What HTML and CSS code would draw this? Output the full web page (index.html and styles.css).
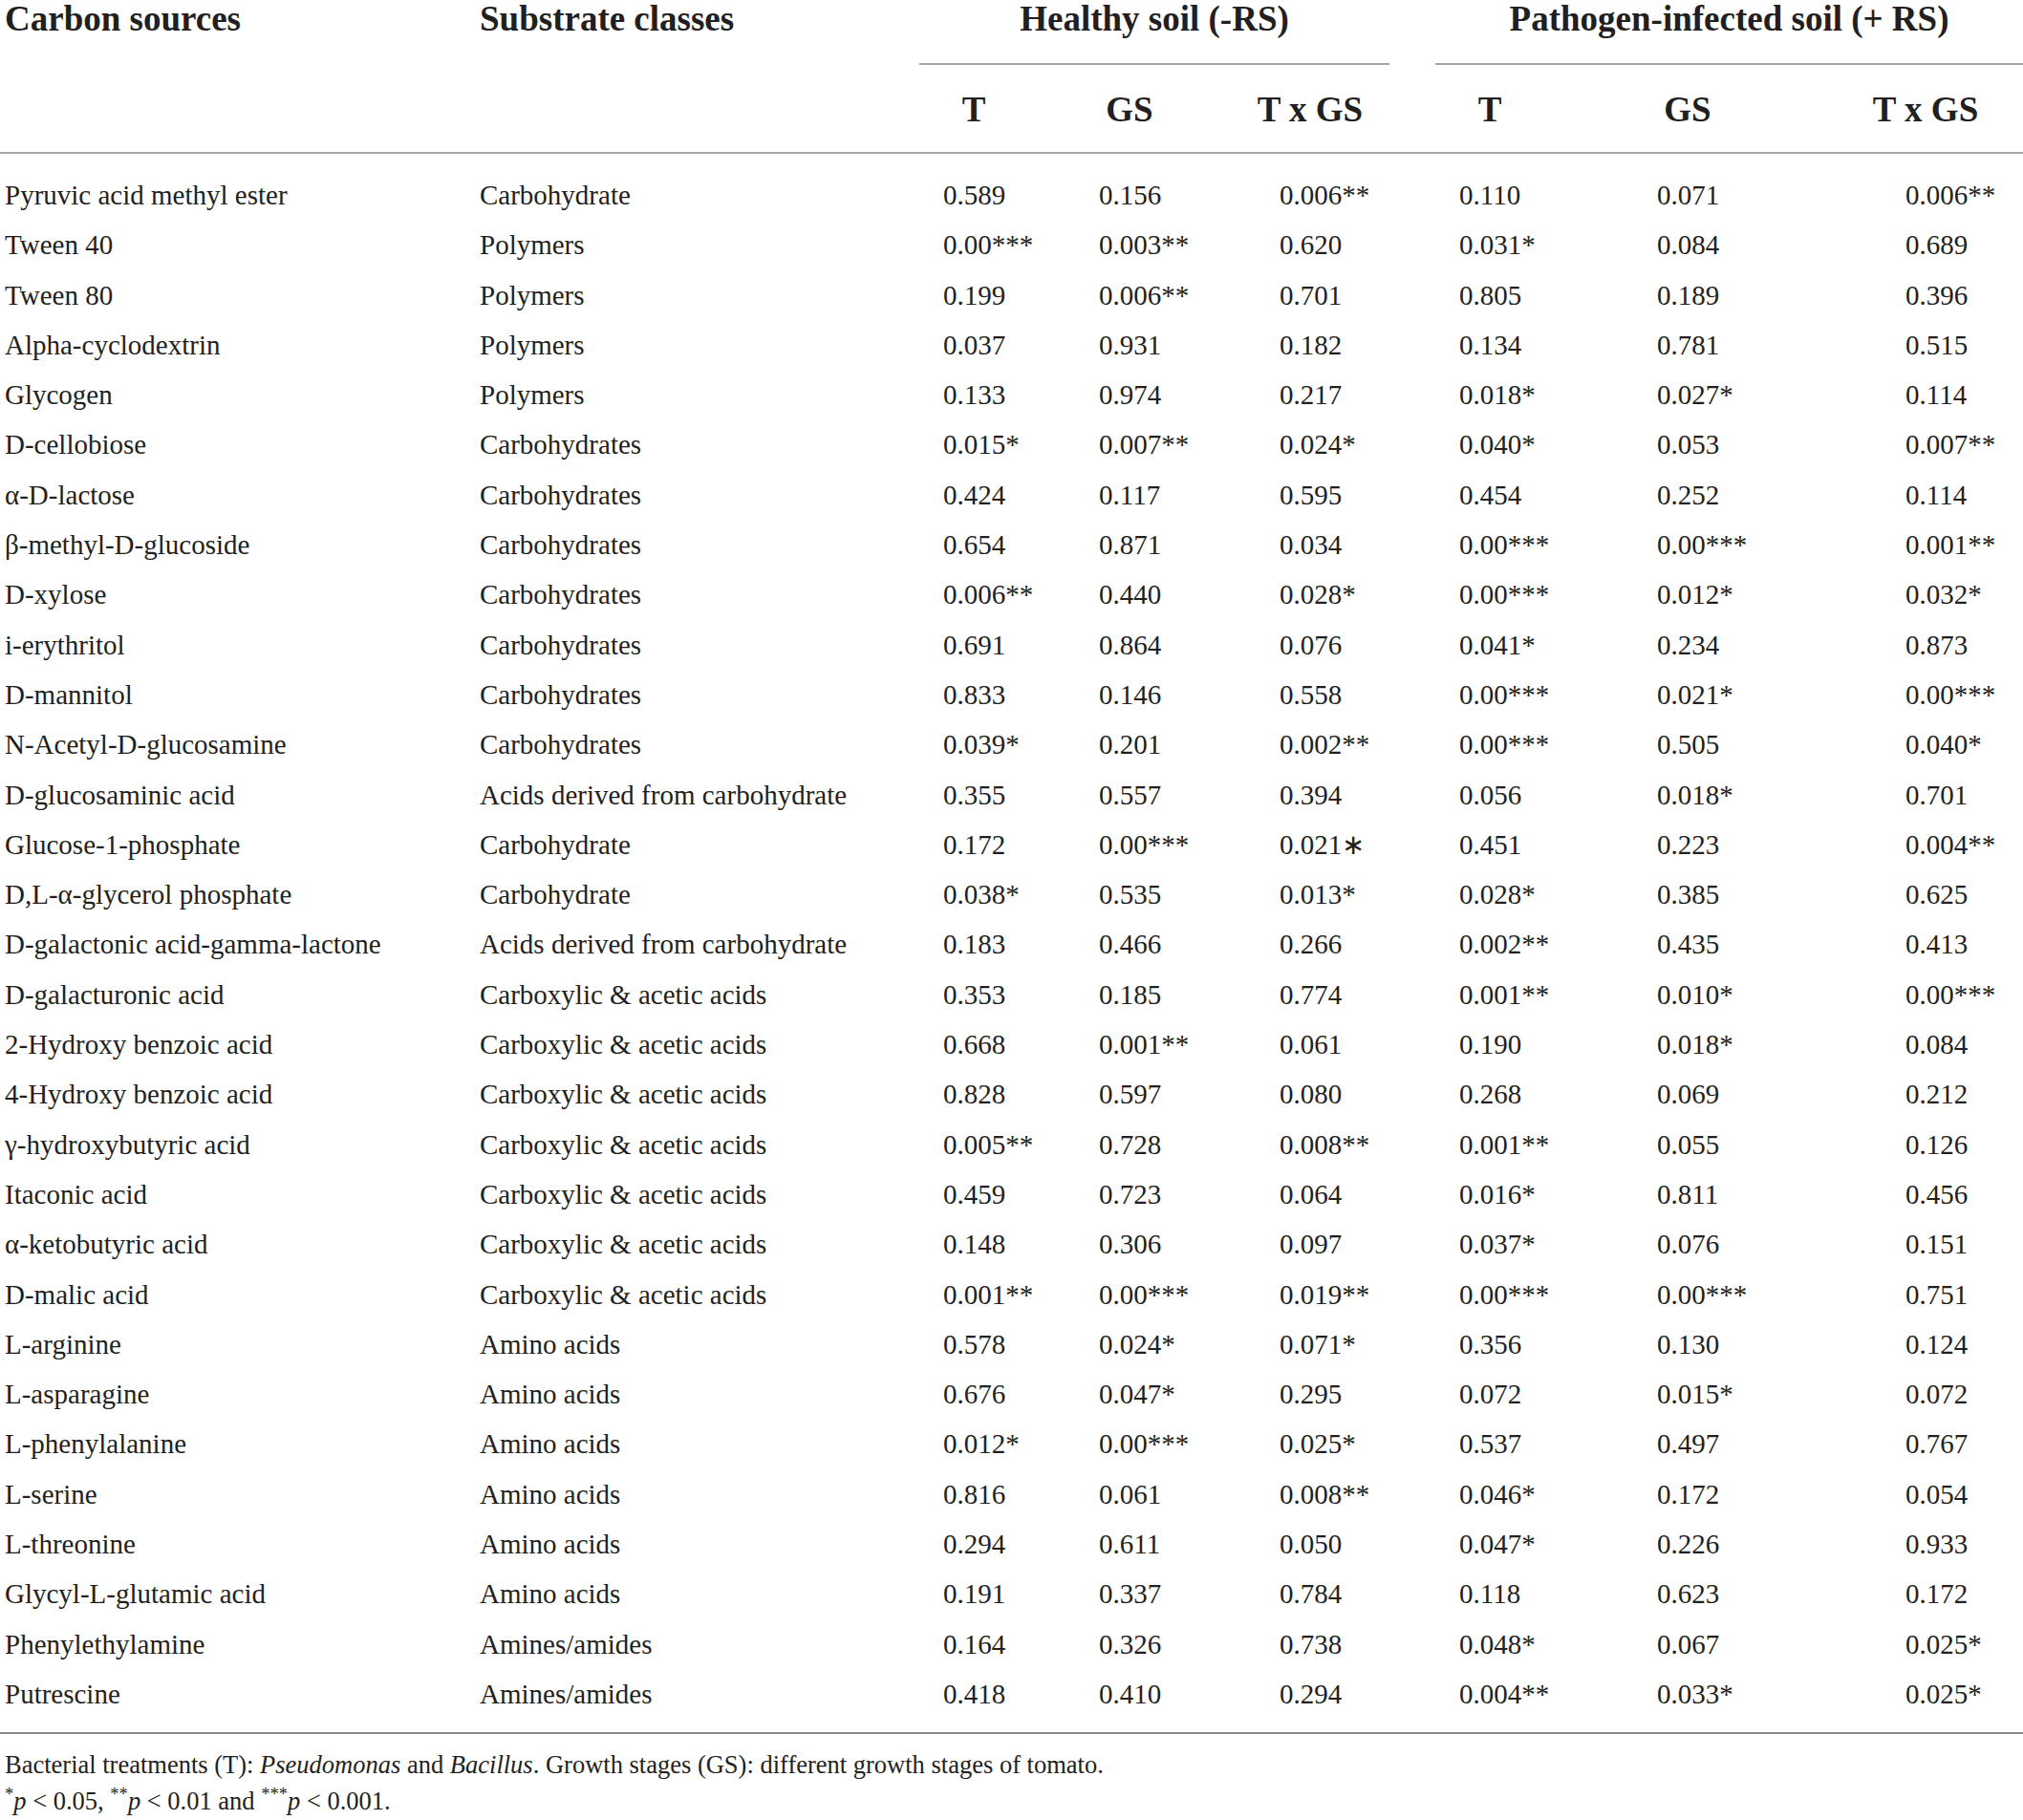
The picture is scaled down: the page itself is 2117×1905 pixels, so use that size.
FILE: index.html
```html
<!DOCTYPE html>
<html lang="en">
<head>
    <meta charset="UTF-8">
    <title>Carbon source utilisation</title>
    <link rel="stylesheet" href="styles.css">
</head>
<body>
    <table class="stats">
        <colgroup>
            <col class="c-name">
            <col class="c-class">
            <col class="c-h1">
            <col class="c-h2">
            <col class="c-h3">
            <col class="c-p1">
            <col class="c-p2">
            <col class="c-p3">
        </colgroup>
        <thead>
            <tr class="group-row">
                <th rowspan="2" class="lead">Carbon sources</th>
                <th rowspan="2" class="lead">Substrate classes</th>
                <th colspan="3" class="group healthy"><div class="group-label">Healthy soil (-RS)</div></th>
                <th colspan="3" class="group infected"><div class="group-label">Pathogen-infected soil (+ RS)</div></th>
            </tr>
            <tr class="sub-row">
                <th class="num"><span class="sub">T</span></th>
                <th class="num"><span class="sub">GS</span></th>
                <th class="num"><span class="sub">T x GS</span></th>
                <th class="num"><span class="sub">T</span></th>
                <th class="num"><span class="sub">GS</span></th>
                <th class="num"><span class="sub narrow">T x GS</span></th>
            </tr>
        </thead>
        <tbody>
            <tr><td>Pyruvic acid methyl ester</td><td>Carbohydrate</td><td>0.589</td><td>0.156</td><td>0.006**</td><td>0.110</td><td>0.071</td><td>0.006**</td></tr>
            <tr><td>Tween 40</td><td>Polymers</td><td>0.00***</td><td>0.003**</td><td>0.620</td><td>0.031*</td><td>0.084</td><td>0.689</td></tr>
            <tr><td>Tween 80</td><td>Polymers</td><td>0.199</td><td>0.006**</td><td>0.701</td><td>0.805</td><td>0.189</td><td>0.396</td></tr>
            <tr><td>Alpha-cyclodextrin</td><td>Polymers</td><td>0.037</td><td>0.931</td><td>0.182</td><td>0.134</td><td>0.781</td><td>0.515</td></tr>
            <tr><td>Glycogen</td><td>Polymers</td><td>0.133</td><td>0.974</td><td>0.217</td><td>0.018*</td><td>0.027*</td><td>0.114</td></tr>
            <tr><td>D-cellobiose</td><td>Carbohydrates</td><td>0.015*</td><td>0.007**</td><td>0.024*</td><td>0.040*</td><td>0.053</td><td>0.007**</td></tr>
            <tr><td>α-D-lactose</td><td>Carbohydrates</td><td>0.424</td><td>0.117</td><td>0.595</td><td>0.454</td><td>0.252</td><td>0.114</td></tr>
            <tr><td>β-methyl-D-glucoside</td><td>Carbohydrates</td><td>0.654</td><td>0.871</td><td>0.034</td><td>0.00***</td><td>0.00***</td><td>0.001**</td></tr>
            <tr><td>D-xylose</td><td>Carbohydrates</td><td>0.006**</td><td>0.440</td><td>0.028*</td><td>0.00***</td><td>0.012*</td><td>0.032*</td></tr>
            <tr><td>i-erythritol</td><td>Carbohydrates</td><td>0.691</td><td>0.864</td><td>0.076</td><td>0.041*</td><td>0.234</td><td>0.873</td></tr>
            <tr><td>D-mannitol</td><td>Carbohydrates</td><td>0.833</td><td>0.146</td><td>0.558</td><td>0.00***</td><td>0.021*</td><td>0.00***</td></tr>
            <tr><td>N-Acetyl-D-glucosamine</td><td>Carbohydrates</td><td>0.039*</td><td>0.201</td><td>0.002**</td><td>0.00***</td><td>0.505</td><td>0.040*</td></tr>
            <tr><td>D-glucosaminic acid</td><td>Acids derived from carbohydrate</td><td>0.355</td><td>0.557</td><td>0.394</td><td>0.056</td><td>0.018*</td><td>0.701</td></tr>
            <tr><td>Glucose-1-phosphate</td><td>Carbohydrate</td><td>0.172</td><td>0.00***</td><td>0.021∗</td><td>0.451</td><td>0.223</td><td>0.004**</td></tr>
            <tr><td>D,L-α-glycerol phosphate</td><td>Carbohydrate</td><td>0.038*</td><td>0.535</td><td>0.013*</td><td>0.028*</td><td>0.385</td><td>0.625</td></tr>
            <tr><td>D-galactonic acid-gamma-lactone</td><td>Acids derived from carbohydrate</td><td>0.183</td><td>0.466</td><td>0.266</td><td>0.002**</td><td>0.435</td><td>0.413</td></tr>
            <tr><td>D-galacturonic acid</td><td>Carboxylic &amp; acetic acids</td><td>0.353</td><td>0.185</td><td>0.774</td><td>0.001**</td><td>0.010*</td><td>0.00***</td></tr>
            <tr><td>2-Hydroxy benzoic acid</td><td>Carboxylic &amp; acetic acids</td><td>0.668</td><td>0.001**</td><td>0.061</td><td>0.190</td><td>0.018*</td><td>0.084</td></tr>
            <tr><td>4-Hydroxy benzoic acid</td><td>Carboxylic &amp; acetic acids</td><td>0.828</td><td>0.597</td><td>0.080</td><td>0.268</td><td>0.069</td><td>0.212</td></tr>
            <tr><td>γ-hydroxybutyric acid</td><td>Carboxylic &amp; acetic acids</td><td>0.005**</td><td>0.728</td><td>0.008**</td><td>0.001**</td><td>0.055</td><td>0.126</td></tr>
            <tr><td>Itaconic acid</td><td>Carboxylic &amp; acetic acids</td><td>0.459</td><td>0.723</td><td>0.064</td><td>0.016*</td><td>0.811</td><td>0.456</td></tr>
            <tr><td>α-ketobutyric acid</td><td>Carboxylic &amp; acetic acids</td><td>0.148</td><td>0.306</td><td>0.097</td><td>0.037*</td><td>0.076</td><td>0.151</td></tr>
            <tr><td>D-malic acid</td><td>Carboxylic &amp; acetic acids</td><td>0.001**</td><td>0.00***</td><td>0.019**</td><td>0.00***</td><td>0.00***</td><td>0.751</td></tr>
            <tr><td>L-arginine</td><td>Amino acids</td><td>0.578</td><td>0.024*</td><td>0.071*</td><td>0.356</td><td>0.130</td><td>0.124</td></tr>
            <tr><td>L-asparagine</td><td>Amino acids</td><td>0.676</td><td>0.047*</td><td>0.295</td><td>0.072</td><td>0.015*</td><td>0.072</td></tr>
            <tr><td>L-phenylalanine</td><td>Amino acids</td><td>0.012*</td><td>0.00***</td><td>0.025*</td><td>0.537</td><td>0.497</td><td>0.767</td></tr>
            <tr><td>L-serine</td><td>Amino acids</td><td>0.816</td><td>0.061</td><td>0.008**</td><td>0.046*</td><td>0.172</td><td>0.054</td></tr>
            <tr><td>L-threonine</td><td>Amino acids</td><td>0.294</td><td>0.611</td><td>0.050</td><td>0.047*</td><td>0.226</td><td>0.933</td></tr>
            <tr><td>Glycyl-L-glutamic acid</td><td>Amino acids</td><td>0.191</td><td>0.337</td><td>0.784</td><td>0.118</td><td>0.623</td><td>0.172</td></tr>
            <tr><td>Phenylethylamine</td><td>Amines/amides</td><td>0.164</td><td>0.326</td><td>0.738</td><td>0.048*</td><td>0.067</td><td>0.025*</td></tr>
            <tr><td>Putrescine</td><td>Amines/amides</td><td>0.418</td><td>0.410</td><td>0.294</td><td>0.004**</td><td>0.033*</td><td>0.025*</td></tr>
        </tbody>
    </table>

    <!-- Table footnotes -->
    <div class="notes">
        <p>Bacterial treatments (T): <i>Pseudomonas</i> and <i>Bacillus</i>. Growth stages (GS): different growth stages of tomato.</p>
        <p><sup>*</sup><i>p</i> &lt; 0.05, <sup>**</sup><i>p</i> &lt; 0.01 and <sup>***</sup><i>p</i> &lt; 0.001.</p>
    </div>
</body>
</html>
```

FILE: styles.css
```css
body {
    margin: 0;
    background: #ffffff;
    color: #231f20;
    font-family: "Liberation Serif", "Times New Roman", serif;
}

.stats {
    width: 2117px;
    table-layout: fixed;
    border-collapse: collapse;
    font-size: 29px;
}

.c-name { width: 502px; }
.c-class { width: 460px; }
.c-h1 { width: 163px; }
.c-h2 { width: 189px; }
.c-h3 { width: 188px; }
.c-p1 { width: 207px; }
.c-p2 { width: 260px; }
.c-p3 { width: 148px; }

/* header */
.stats thead {
    border-bottom: 2px solid #a6a6a6;
}

.stats th {
    font-size: 37px;
    font-weight: bold;
    line-height: 40px;
    padding: 0;
    text-align: left;
    vertical-align: top;
    white-space: nowrap;
}

.stats th.lead:first-child {
    padding-left: 5px;
}

.group-label {
    text-align: center;
    padding-bottom: 26px;
    border-bottom: 2px solid #a6a6a6;
}

.healthy .group-label {
    margin-right: 48px;
}

.sub-row th {
    padding: 27px 0 24px 25px;
}

.sub {
    display: inline-flex;
    justify-content: center;
    width: 64px;
}

.sub.narrow {
    width: 42px;
}

/* body rows */
.stats tbody {
    border-bottom: 2px solid #8c8c8c;
}

.stats td {
    padding: 0 0 0 25px;
    line-height: 52.3px;
    white-space: nowrap;
    vertical-align: middle;
}

.stats td:first-child {
    padding-left: 5px;
}

.stats td:nth-child(2) {
    padding-left: 0;
}

.stats tbody tr:first-child td {
    padding-top: 17px;
}

.stats tbody tr:last-child td {
    padding-bottom: 14px;
}

/* footnotes */
.notes {
    margin-top: 13px;
    padding-left: 5px;
    font-size: 26.5px;
    line-height: 38px;
}

.notes p {
    margin: 0;
}

.notes sup {
    font-size: 0.7em;
    line-height: 0;
}
```
